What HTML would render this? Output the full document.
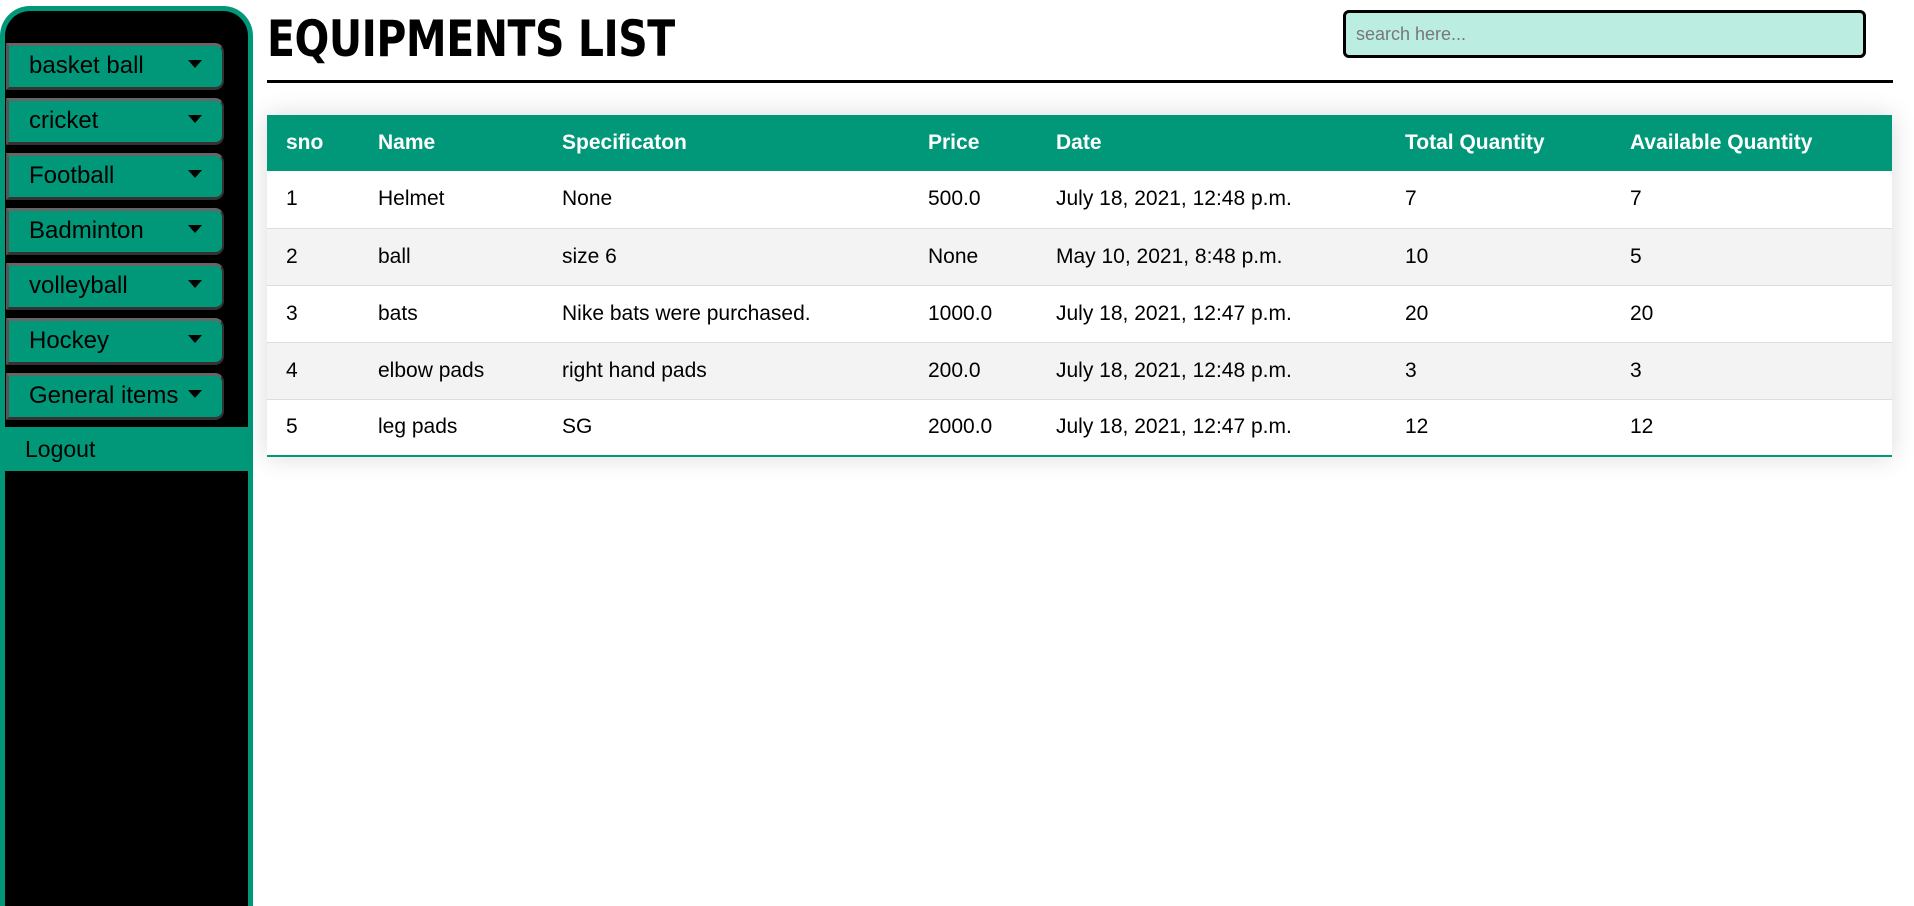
<!DOCTYPE html>
<html><head><meta charset="utf-8"><style>
*{margin:0;padding:0;box-sizing:border-box}
body{width:1914px;height:899px;background:#fff;font-family:"Liberation Sans",Arial,sans-serif;position:relative;overflow:hidden}
.side{position:absolute;left:0;top:6px;width:253px;height:900px;background:#000;border:5px solid #009879;border-bottom:none;border-radius:30px 30px 0 0}
.btn{position:absolute;left:1px;width:218px;height:47px;background:#009879;border-top:3px solid #666;border-left:3px solid #555;border-right:2px solid #333;border-bottom:3px solid #333;border-radius:0 9px 9px 0;font-size:24px;color:#000;padding-left:20px;line-height:40px}
.btn:after{content:"";position:absolute;right:20px;top:14px;border-left:7px solid transparent;border-right:7px solid transparent;border-top:8px solid #000}
.logout{position:absolute;left:0;top:416px;width:243px;height:44px;background:#009879;font-size:23px;line-height:44px;padding-left:20px}
h1{position:absolute;left:267px;top:10px;font-family:"DejaVu Sans Condensed","DejaVu Sans",sans-serif;font-weight:bold;font-size:50px;letter-spacing:-0.5px;transform:scaleX(0.91);transform-origin:left}
.hr{position:absolute;left:267px;top:80px;width:1626px;height:3px;background:#000}
.search{position:absolute;left:1343px;top:10px;width:523px;height:48px;background:#bcede1;border:3px solid #000;border-radius:6px;font-size:18px;color:#777;padding-left:10px;line-height:42px}
table{position:absolute;left:267px;top:115px;width:1625px;border-collapse:collapse;box-shadow:0 0 24px rgba(0,0,0,0.15);font-size:21px}
th{background:#009879;color:#fff;text-align:left;font-weight:bold;height:56px;padding-left:19px}
td{height:57px;padding-left:19px;border-bottom:1px solid #ddd;background:#fff}
tr:nth-child(odd) td{background:#f3f3f3}
tr:last-child td{border-bottom:2px solid #009879}
</style></head><body>
<div class="side">
<div class="btn" style="top:32px">basket ball</div>
<div class="btn" style="top:87px">cricket</div>
<div class="btn" style="top:142px">Football</div>
<div class="btn" style="top:197px">Badminton</div>
<div class="btn" style="top:252px">volleyball</div>
<div class="btn" style="top:307px">Hockey</div>
<div class="btn" style="top:362px">General items</div>
<div class="logout">Logout</div>
</div>
<h1>EQUIPMENTS LIST</h1>
<div class="search">search here...</div>
<div class="hr"></div>
<table>
<tr><th style="width:92px">sno</th><th style="width:184px">Name</th><th style="width:366px">Specificaton</th><th style="width:128px">Price</th><th style="width:349px">Date</th><th style="width:225px">Total Quantity</th><th>Available Quantity</th></tr>
<tr><td>1</td><td>Helmet</td><td>None</td><td>500.0</td><td>July 18, 2021, 12:48 p.m.</td><td>7</td><td>7</td></tr>
<tr><td>2</td><td>ball</td><td>size 6</td><td>None</td><td>May 10, 2021, 8:48 p.m.</td><td>10</td><td>5</td></tr>
<tr><td>3</td><td>bats</td><td>Nike bats were purchased.</td><td>1000.0</td><td>July 18, 2021, 12:47 p.m.</td><td>20</td><td>20</td></tr>
<tr><td>4</td><td>elbow pads</td><td>right hand pads</td><td>200.0</td><td>July 18, 2021, 12:48 p.m.</td><td>3</td><td>3</td></tr>
<tr><td>5</td><td>leg pads</td><td>SG</td><td>2000.0</td><td>July 18, 2021, 12:47 p.m.</td><td>12</td><td>12</td></tr>
</table>
</body></html>
